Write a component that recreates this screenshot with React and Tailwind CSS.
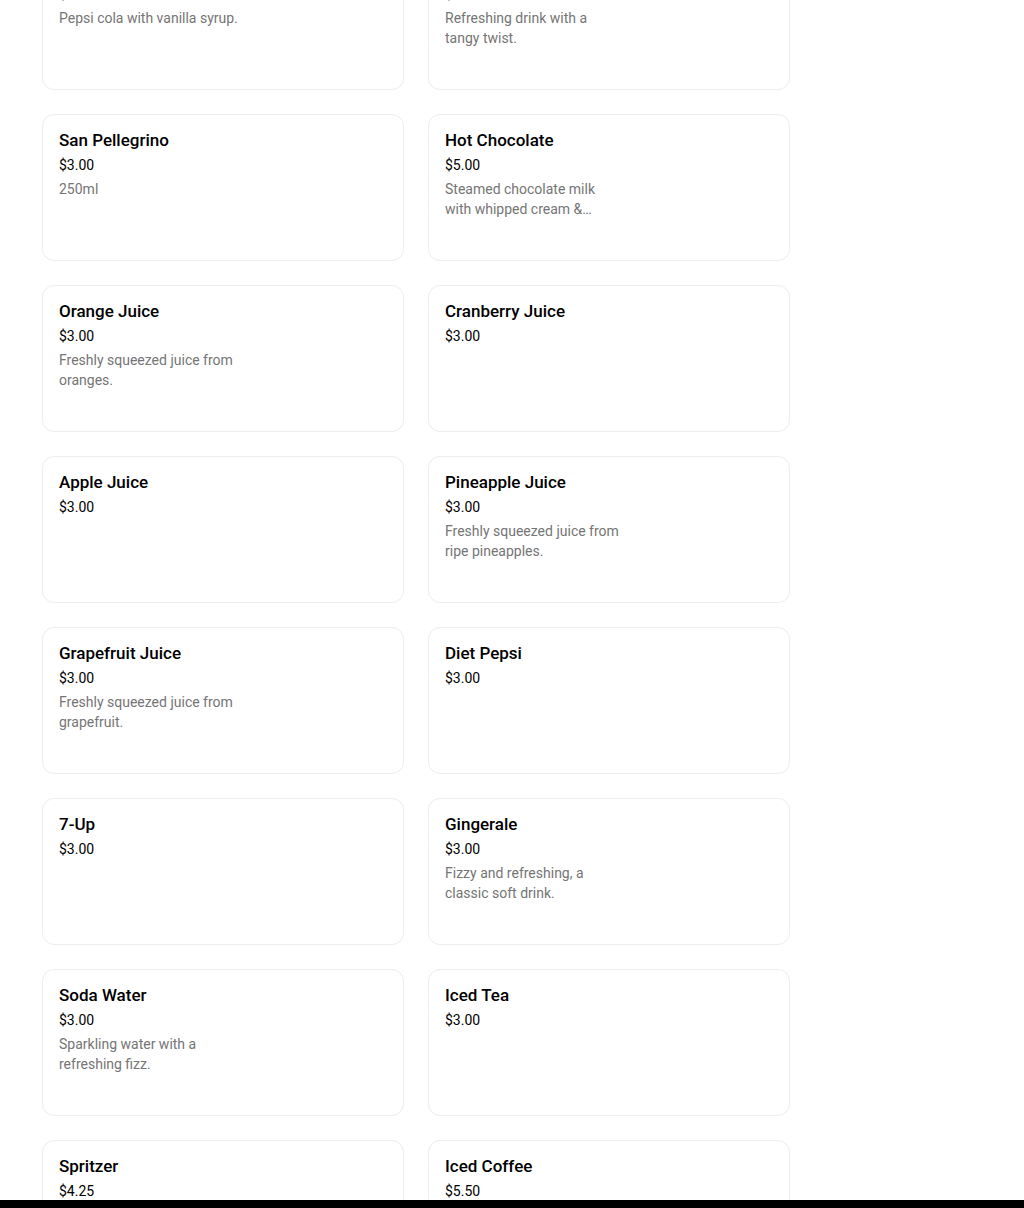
import React from 'react';

const items = [
    { name: 'Vanilla Pepsi', price: '$3.00', desc: 'Pepsi cola with vanilla syrup.' },
    { name: 'Lemonade', price: '$3.00', desc: 'Refreshing drink with a tangy twist.' },
    { name: 'San Pellegrino', price: '$3.00', desc: '250ml' },
    { name: 'Hot Chocolate', price: '$5.00', desc: 'Steamed chocolate milk with whipped cream & marshmallows.' },
    { name: 'Orange Juice', price: '$3.00', desc: 'Freshly squeezed juice from oranges.' },
    { name: 'Cranberry Juice', price: '$3.00' },
    { name: 'Apple Juice', price: '$3.00' },
    { name: 'Pineapple Juice', price: '$3.00', desc: 'Freshly squeezed juice from ripe pineapples.' },
    { name: 'Grapefruit Juice', price: '$3.00', desc: 'Freshly squeezed juice from grapefruit.' },
    { name: 'Diet Pepsi', price: '$3.00' },
    { name: '7-Up', price: '$3.00' },
    { name: 'Gingerale', price: '$3.00', desc: 'Fizzy and refreshing, a classic soft drink.' },
    { name: 'Soda Water', price: '$3.00', desc: 'Sparkling water with a refreshing fizz.' },
    { name: 'Iced Tea', price: '$3.00' },
    { name: 'Spritzer', price: '$4.25' },
    { name: 'Iced Coffee', price: '$5.50' },
];

function ItemCard({ item }) {
    return (
        <div className="h-[147px] rounded-xl border border-[#ededed] bg-white p-4">
            <div className="-mt-px text-[17px] leading-5 font-medium text-black">{item.name}</div>
            <div className="mt-[5px] text-sm leading-5 text-black">{item.price}</div>
            {item.desc && (
                <div className="mt-1 max-w-[179px] text-sm leading-5 text-[#757575] line-clamp-2">{item.desc}</div>
            )}
        </div>
    );
}

export default function App() {
    return (
        <div className="h-[1208px] overflow-hidden bg-white" style={{ fontFamily: 'Roboto, "Liberation Sans", sans-serif' }}>
            <div className="-mt-[57px] pl-[42px]">
                <div className="grid w-[748px] grid-cols-2 gap-6">
                    {items.map((item) => (
                        <ItemCard key={item.name} item={item} />
                    ))}
                </div>
            </div>
            <div className="fixed bottom-0 left-0 right-0 h-2 bg-black" />
        </div>
    );
}
